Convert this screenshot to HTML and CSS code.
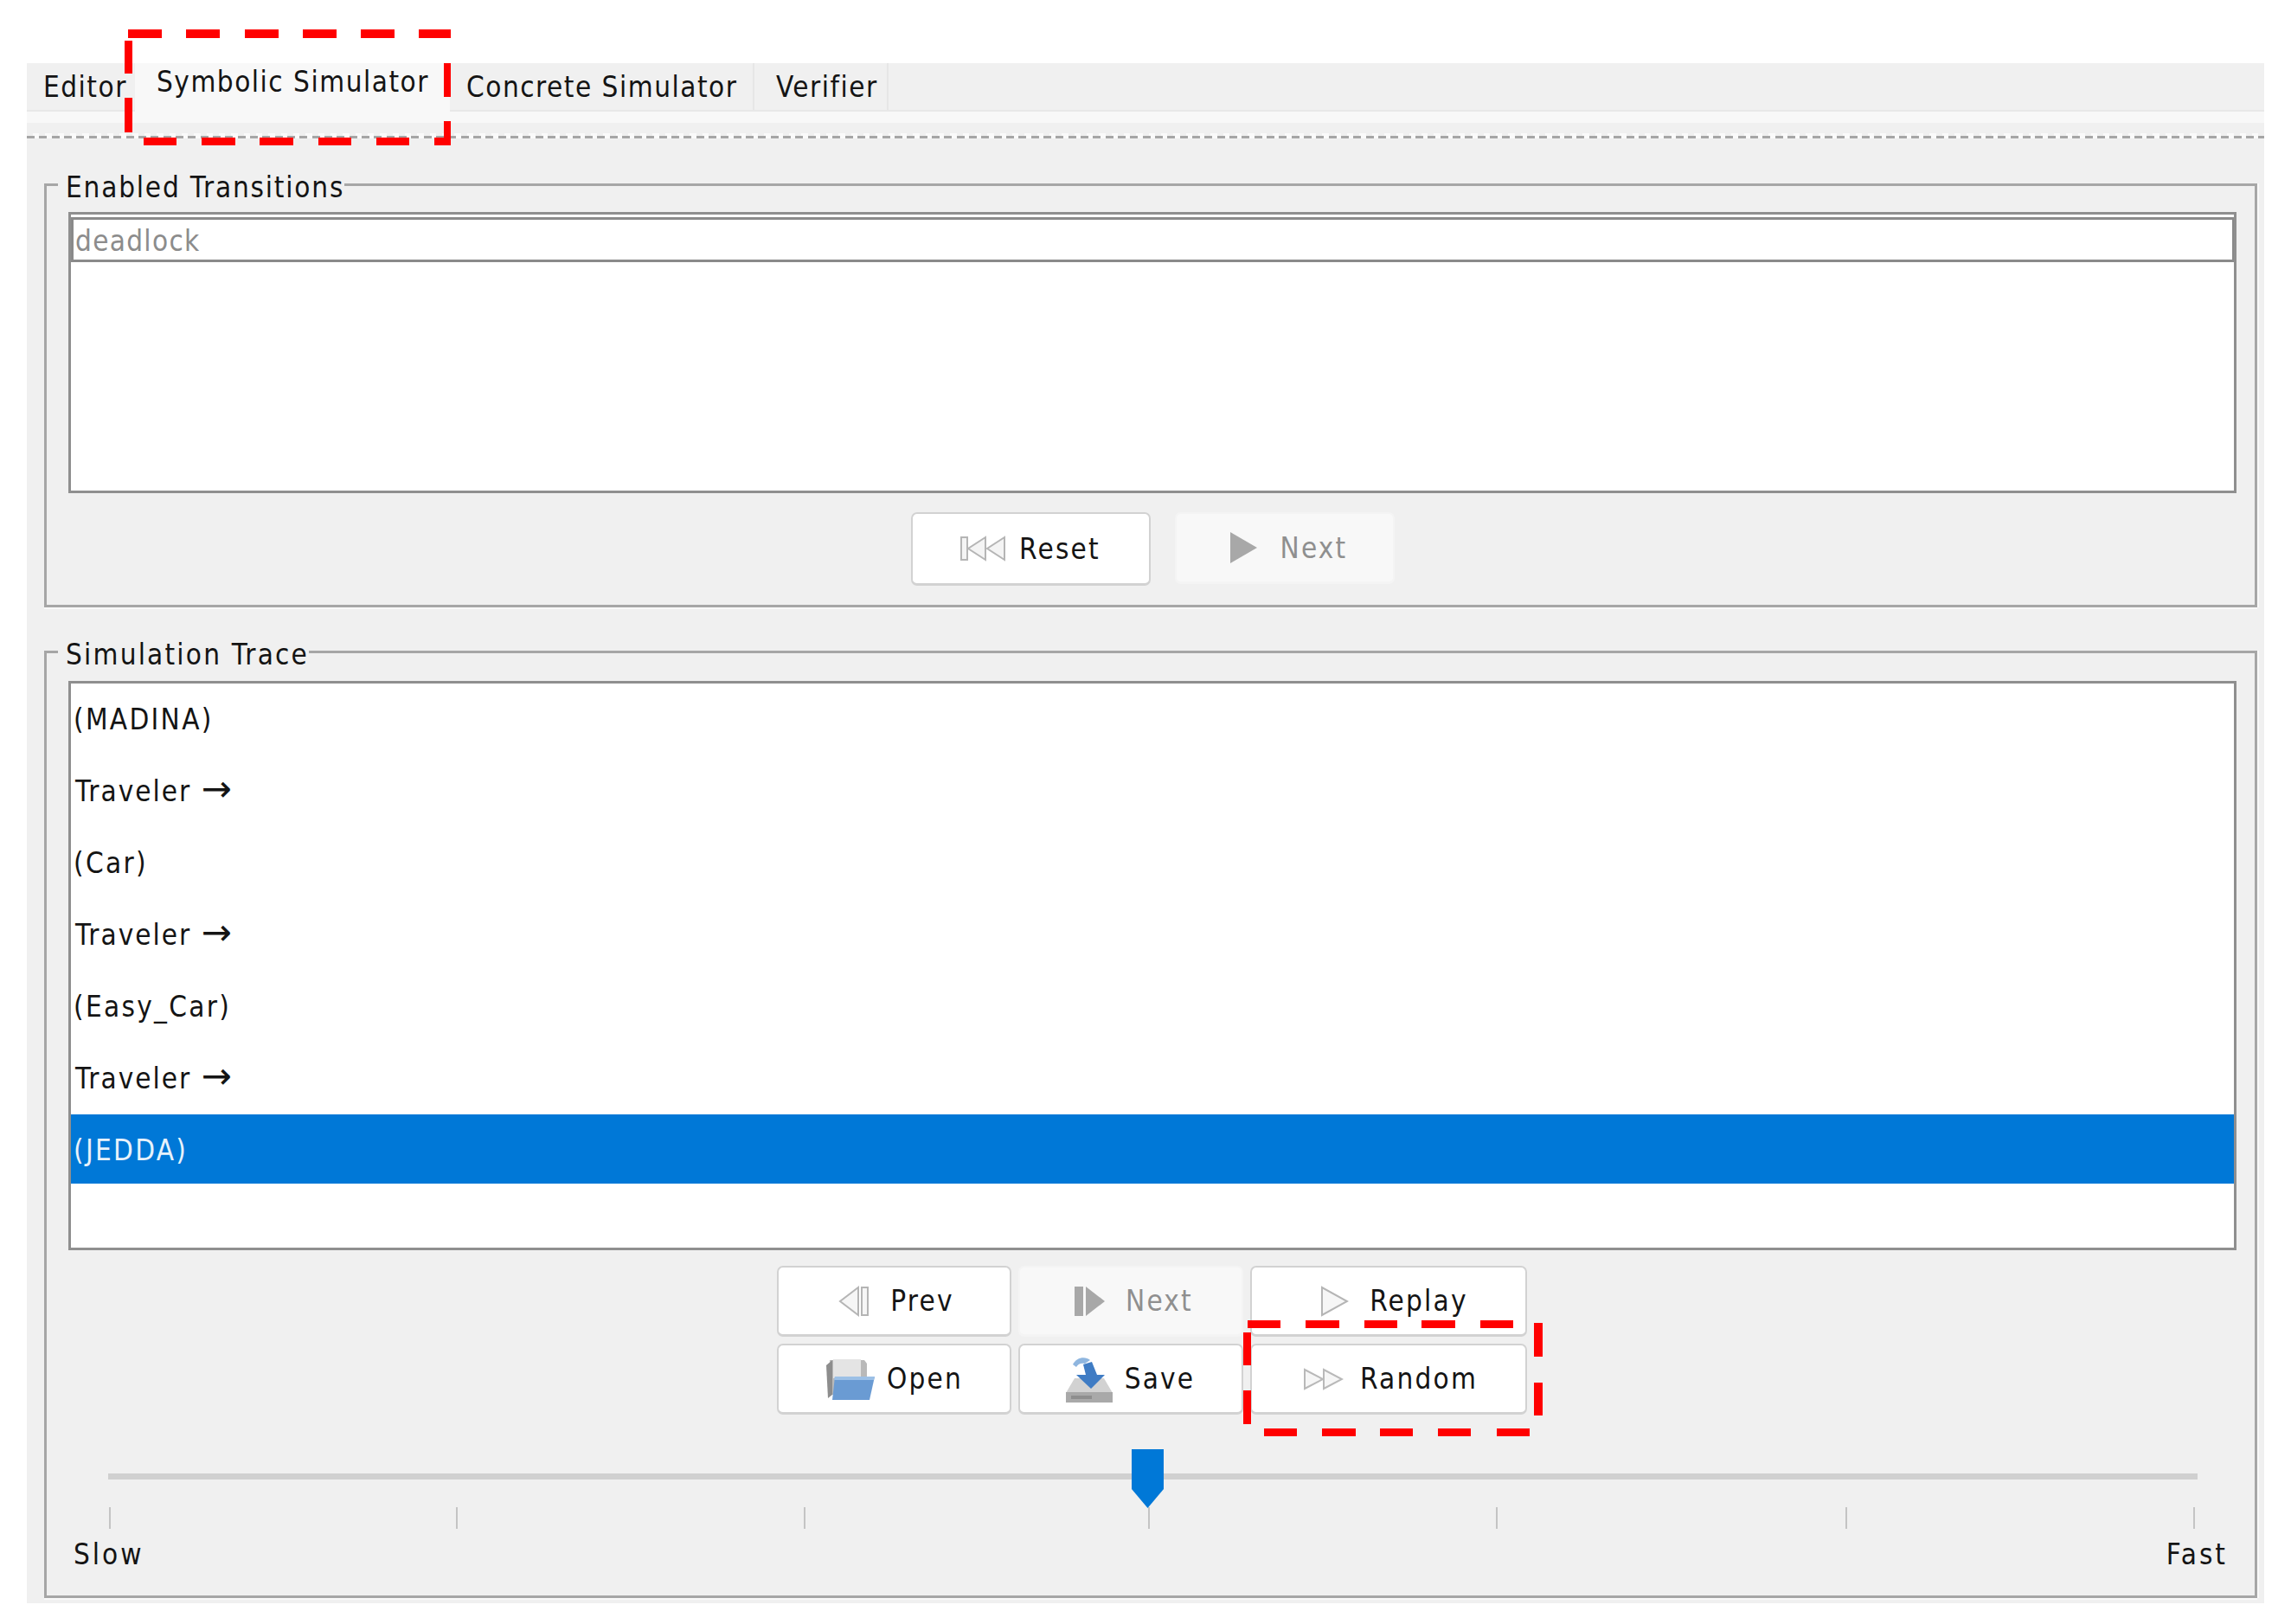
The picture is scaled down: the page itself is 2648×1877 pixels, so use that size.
FILE: index.html
```html
<!DOCTYPE html>
<html lang="en">
<head>
    <meta charset="UTF-8">
    <title>Symbolic Simulator</title>
    <link rel="stylesheet" href="styles.css">
</head>
<body>

<div class="window">
    <div class="tabs">
        <div class="tab tab--first">Editor</div>
        <div class="tab tab--active">Symbolic Simulator</div>
        <div class="tab tab--concrete">Concrete Simulator</div>
        <div class="tab tab--verifier">Verifier</div>
    </div>
    <div class="strip"></div>
    <div class="dots"></div>

    <fieldset class="group group--enabled">
        <legend>Enabled Transitions</legend>
        <div class="list list--enabled">
            <div class="deadlock">deadlock</div>
        </div>
        <div class="actions">
            <div class="btn btn--reset">
                <svg width="52" height="30" viewBox="0 0 52 30"><g fill="#f4f4f4" stroke="#b5b5b5" stroke-width="2"><rect x="1" y="2" width="7" height="26"/><path d="M29 2v26L9 15z"/><path d="M51 2v26L31 15z"/></g></svg>
                <span>Reset</span>
            </div>
            <div class="btn btn--off btn--next">
                <svg width="32" height="36" viewBox="0 0 32 36"><path d="M1 0v36l31-18z" fill="#a8a8a8"/></svg>
                <span>Next</span>
            </div>
        </div>
    </fieldset>

    <fieldset class="group group--trace">
        <legend>Simulation Trace</legend>
        <div class="list list--trace">
            <div class="row row--state">(MADINA)</div>
            <div class="row">Traveler <span class="arrow">&#8594;</span></div>
            <div class="row row--state">(Car)</div>
            <div class="row">Traveler <span class="arrow">&#8594;</span></div>
            <div class="row row--state">(Easy_Car)</div>
            <div class="row">Traveler <span class="arrow">&#8594;</span></div>
            <div class="row row--state row--selected">(JEDDA)</div>
        </div>

        <div class="controls">
            <div class="btn btn--prev">
                <svg width="36" height="36" viewBox="0 0 36 36"><g fill="#f6f6f6" stroke="#b5b5b5" stroke-width="2"><path d="M23 2v32L2 18z"/><rect x="27" y="2" width="7" height="32"/></g></svg>
                <span>Prev</span>
            </div>
            <div class="btn btn--off btn--forward">
                <svg width="35" height="36" viewBox="0 0 35 36"><rect x="0" y="1" width="10" height="34" fill="#a8a8a8"/><path d="M13 1v34l22-17z" fill="#a8a8a8"/></svg>
                <span>Next</span>
            </div>
            <div class="btn btn--replay">
                <svg width="33" height="36" viewBox="0 0 33 36"><path d="M2 2v32l29-16z" fill="#f6f6f6" stroke="#b5b5b5" stroke-width="2"/></svg>
                <span>Replay</span>
            </div>
            <div class="btn btn--tight">
                <svg width="58" height="50" viewBox="0 0 58 50">
                    <path d="M6 3h40l3 4v36H8z" fill="#b9b9b9"/>
                    <path d="M10 2h32v22H10z" fill="#e4e4e4"/>
                    <path d="M2 9l7-6v40l-5 4z" fill="#8d8d8d"/>
                    <path d="M12 22h46l-6 27H9z" fill="#6a9bd3"/>
                    <path d="M12 22h46l-1 4H11z" fill="#9cc0e6"/>
                </svg>
                <span>Open</span>
            </div>
            <div class="btn btn--tight">
                <svg width="54" height="54" viewBox="0 0 54 54">
                    <path d="M10 26h34l10 17v11H0V43z" fill="#d2d2d2"/>
                    <rect x="0" y="42" width="54" height="12" fill="#a9a9a9"/>
                    <rect x="6" y="46" width="24" height="4" fill="#8e8e8e"/>
                    <path d="M8 10c4-8 14-10 20-5l-6 4c-4-1-8 0-10 4z" fill="#8fb6df"/>
                    <path d="M20 10l10-3 6 15h9L29 38 12 22h11z" fill="#3f7cc4"/>
                </svg>
                <span>Save</span>
            </div>
            <div class="btn btn--random">
                <svg width="47" height="26" viewBox="0 0 47 26"><g fill="#f6f6f6" stroke="#b9b9b9" stroke-width="2"><path d="M2 2v22l21-11z"/><path d="M24 2v22l21-11z"/></g></svg>
                <span>Random</span>
            </div>
        </div>

        <div class="slider">
            <div class="track">
                <svg class="thumb" width="37" height="68" viewBox="0 0 37 68"><path d="M0 0h37v46L18.500 68 0 46z" fill="#0078d7"/></svg>
            </div>
            <div class="ticks">
                <i></i><i></i><i></i><i></i><i></i><i></i><i></i>
            </div>
        </div>
        <div class="speed">
            <span>Slow</span>
            <span>Fast</span>
        </div>
    </fieldset>
</div>

<!-- red annotation marks drawn over the screenshot -->
<svg class="marks" width="2648" height="1877" viewBox="0 0 2648 1877">
    <g fill="#f00">
        <rect x="148" y="34" width="39" height="10"/><rect x="215" y="34" width="39" height="10"/><rect x="283" y="34" width="39" height="10"/><rect x="350" y="34" width="39" height="10"/><rect x="417" y="34" width="39" height="10"/><rect x="484" y="34" width="37" height="10"/>
        <rect x="144" y="47" width="9" height="38"/><rect x="144" y="113" width="9" height="40"/>
        <rect x="513" y="73" width="8" height="39"/><rect x="513" y="140" width="8" height="28"/>
        <rect x="166" y="159" width="38" height="9"/><rect x="233" y="159" width="39" height="9"/><rect x="300" y="159" width="39" height="9"/><rect x="368" y="159" width="38" height="9"/><rect x="435" y="159" width="38" height="9"/><rect x="502" y="159" width="19" height="9"/>

        <rect x="1442" y="1526" width="38" height="9"/><rect x="1509" y="1526" width="39" height="9"/><rect x="1577" y="1526" width="38" height="9"/><rect x="1643" y="1526" width="39" height="9"/><rect x="1711" y="1526" width="38" height="9"/>
        <rect x="1437" y="1540" width="9" height="38"/><rect x="1437" y="1607" width="9" height="39"/>
        <rect x="1773" y="1529" width="10" height="39"/><rect x="1773" y="1598" width="10" height="38"/>
        <rect x="1461" y="1651" width="38" height="9"/><rect x="1528" y="1651" width="39" height="9"/><rect x="1595" y="1651" width="38" height="9"/><rect x="1662" y="1651" width="38" height="9"/><rect x="1730" y="1651" width="38" height="9"/>
    </g>
</svg>

</body>
</html>
```

FILE: styles.css
```css
* {
    margin: 0;
    padding: 0;
    box-sizing: border-box;
}

body {
    position: relative;
    height: 1877px;
    overflow: hidden;
    background: #fff;
    color: #141414;
    font-family: "DejaVu Sans", sans-serif;
    font-stretch: condensed;
    font-size: 33px;
    letter-spacing: 2.2px;
}

.window {
    width: 2586px;
    height: 1780px;
    margin: 73px 0 0 31px;
    background: #f0f0f0;
}

.tabs {
    display: flex;
    height: 56px;
    border-bottom: 2px solid #e8e8e8;
}

.tab {
    height: 54px;
    line-height: 56px;
    letter-spacing: 1.5px;
    border-right: 2px solid #e6e6e6;
}

.tab--first {
    width: 125px;
    padding-left: 19px;
    border-right: none;
}

.tab--active {
    width: 364px;
    height: 69px;
    padding-left: 25px;
    line-height: 44px;
    background: #f8f8f8;
    border-right: none;
}

.tab--concrete {
    width: 352px;
    padding-left: 19px;
}

.tab--verifier {
    width: 155px;
    padding-left: 25px;
}

.strip {
    height: 13px;
    background: #f8f8f8;
}

/* dotted splitter: gray lower half, light upper half */
.dots {
    height: 6px;
    margin-top: 12px;
    background:
        repeating-linear-gradient(90deg, #a6a6a6 0, #a6a6a6 9px, #fafafa 9px, #fafafa 14.33px) bottom / 100% 3px no-repeat,
        repeating-linear-gradient(90deg, #f0f0f0 0, #f0f0f0 7px, #fafafa 7px, #fafafa 14.33px) top / 100% 3px no-repeat;
}

.group {
    margin-left: 20px;
    width: 2558px;
    border: 3px solid #a6a6a6;
    box-shadow: 0 2px 0 #f9f9f9, 2px 0 0 #f9f9f9;
    padding: 0 21px 0 25px;
}

.group legend {
    margin-left: -12px;
    padding: 8px 0 0 9px;
    line-height: 40px;
    letter-spacing: 1.8px;
}

.group--enabled {
    height: 513px;
    margin-top: 29px;
    padding-top: 8px;
}

.group--trace {
    height: 1118px;
    margin-top: 27px;
    padding-top: 10px;
}

.group--trace legend {
    letter-spacing: 2.2px;
}

.list {
    background: #fff;
    border: 3px solid #8f8f8f;
}

.list--enabled {
    height: 325px;
    padding-top: 3px;
}

.deadlock {
    height: 52px;
    line-height: 50px;
    padding-left: 2px;
    border: 3px solid #8a8a8a;
    border-right-width: 2px;
    letter-spacing: 1.3px;
    color: #8c8c8c;
}

.actions {
    display: flex;
    justify-content: center;
    gap: 28px;
    margin-top: 22px;
}

.btn {
    display: flex;
    align-items: center;
    justify-content: center;
    gap: 16px;
    background: #fff;
    border: 2px solid #d2d2d2;
    border-bottom-width: 3px;
    border-radius: 7px;
}

.btn--off {
    background: #f8f8f8;
    border-color: #f4f4f4;
    color: #8f8f8f;
}

.btn--reset {
    width: 277px;
    height: 85px;
}

.btn--next {
    width: 254px;
    height: 83px;
    padding-left: 9px;
    gap: 27px;
}

.list--trace {
    display: flex;
    flex-direction: column;
    gap: 3px;
    height: 658px;
}

.row {
    height: 80px;
    line-height: 83px;
    padding-left: 5px;
    letter-spacing: 2px;
}

.row--state {
    padding-left: 3px;
    letter-spacing: 2.3px;
}

.row--selected {
    background: #0078d7;
    color: #e8f2fb;
}

.arrow {
    font-size: 42px;
    line-height: 1px;
    font-stretch: normal;
    letter-spacing: 0;
}

.controls {
    display: grid;
    grid-template-columns: 271px 260px 320px;
    grid-auto-rows: 82px;
    gap: 8px;
    justify-content: center;
    margin-top: 18px;
    padding-right: 2px;
}

.controls .btn {
    gap: 24px;
}

.controls .btn--prev {
    padding-left: 6px;
}

.controls .btn--forward {
    padding-left: 8px;
}

.controls .btn--replay {
    padding-left: 14px;
}

.controls .btn--tight {
    gap: 14px;
}

.controls .btn--random {
    padding-left: 5px;
    gap: 19px;
}

.slider {
    margin: 68px 45px 0 46px;
}

.track {
    position: relative;
    height: 7px;
    background: #d0d0d0;
}

.thumb {
    position: absolute;
    left: 1183px;
    top: -28px;
}

/* the ticks are not quite even in the original */
.ticks {
    display: grid;
    grid-template-columns: 401px 402px 398px 402px 404px 402px 2px;
    margin: 32px 0 0 1px;
}

.ticks i {
    display: block;
    width: 2px;
    height: 25px;
    background: #c4c4c4;
}

.speed {
    display: flex;
    justify-content: space-between;
    margin: 10px 10px 0 6px;
    line-height: 40px;
    letter-spacing: 3px;
}

.marks {
    position: absolute;
    top: 0;
    left: 0;
    pointer-events: none;
}
```
